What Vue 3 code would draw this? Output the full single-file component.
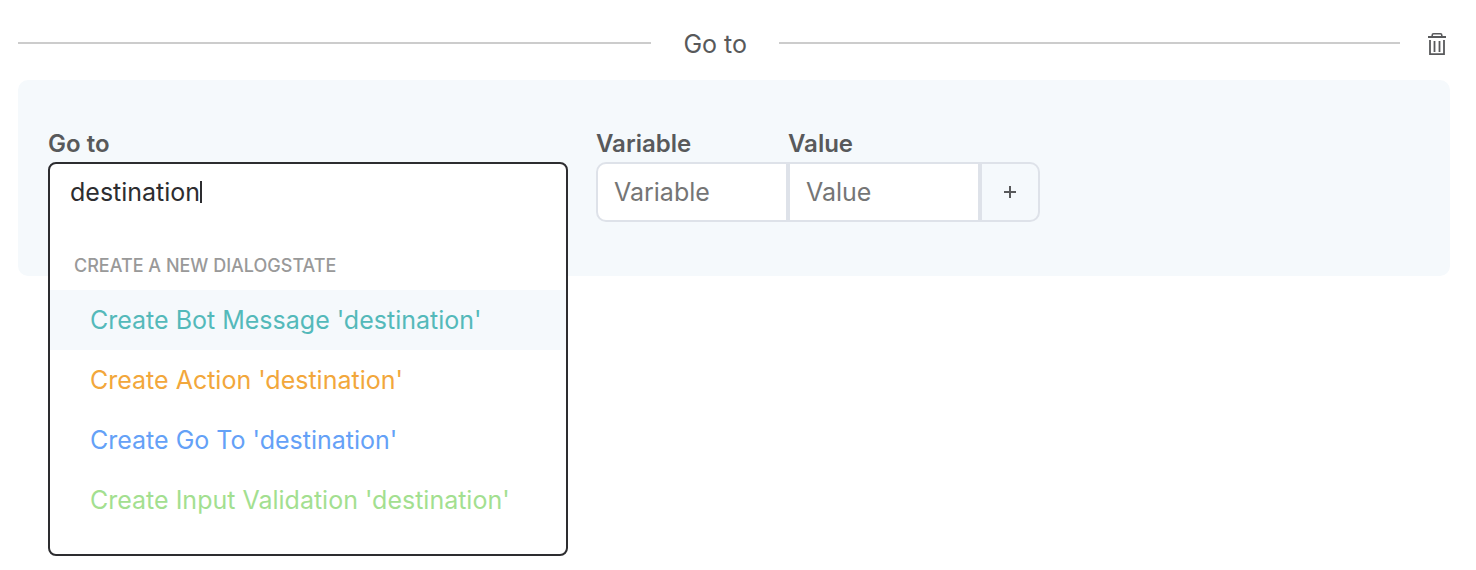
<script setup>
import { ref, computed } from 'vue'

const query = ref('destination')
const variable = ref('')
const value = ref('')
const active = ref(0)

const kinds = [
  { name: 'Bot Message', tone: 'teal' },
  { name: 'Action', tone: 'orange' },
  { name: 'Go To', tone: 'blue' },
  { name: 'Input Validation', tone: 'green' },
]
const options = computed(() =>
  kinds.map((k) => ({ tone: k.tone, label: `Create ${k.name} '${query.value}'` }))
)
</script>

<template>
  <main class="page">
    <header class="divider">
      <span class="rule rule-start"></span>
      <h2 class="title">Go to</h2>
      <span class="rule rule-end"></span>
      <button class="remove" type="button" aria-label="Delete">
        <svg width="20" height="24" viewBox="0 0 20 24" fill="none" stroke="#58595b">
          <path d="M1 5H19" stroke-width="2" />
          <path d="M5.2 5V3.2Q5.2 1.8 6.6 1.8H13.4Q14.8 1.8 14.8 3.2V5" stroke-width="1.6" />
          <path d="M3 8V22.2H17V8" stroke-width="1.8" />
          <path d="M7.5 9V20M12.5 9V20" stroke-width="1.8" />
        </svg>
      </button>
    </header>

    <section class="panel">
      <div class="field target">
        <label class="label" for="goto">Go to</label>
        <div class="anchor">
          <div class="combo">
            <div class="entry">
              <input id="goto" v-model="query" class="query" type="text" autocomplete="off" />
              <span class="caret"></span>
            </div>
            <h3 class="group">CREATE A NEW DIALOGSTATE</h3>
            <ul class="options">
              <li v-for="(o, i) in options" :key="o.tone">
                <button
                  type="button"
                  class="option"
                  :class="[o.tone, { active: i === active }]"
                  @mouseenter="active = i"
                >{{ o.label }}</button>
              </li>
            </ul>
          </div>
        </div>
      </div>

      <div class="field pair">
        <label class="label" for="variable">Variable</label>
        <input id="variable" v-model="variable" class="box first" type="text" placeholder="Variable" />
      </div>
      <div class="field pair">
        <label class="label" for="value">Value</label>
        <input id="value" v-model="value" class="box" type="text" placeholder="Value" />
      </div>
      <button class="add" type="button" aria-label="Add variable">
        <svg width="14" height="14" viewBox="0 0 14 14" fill="none" stroke="#58595b" stroke-width="2">
          <path d="M1 7H13M7 1V13" />
        </svg>
      </button>
    </section>
  </main>
</template>

<style>
body {
  margin: 0;
  background: #fff;
}
</style>

<style scoped>
.page {
  min-height: 100vh;
  padding: 24px 26px 0 18px;
  font-family: Inter, "Liberation Sans", sans-serif;
  font-size: 25px;
  line-height: 36px;
  color: #58595b;
}
.page *,
.page {
  box-sizing: border-box;
}
button,
input {
  font: inherit;
  color: inherit;
  margin: 0;
}
.divider {
  display: flex;
  align-items: center;
  height: 40px;
}
.rule {
  height: 2px;
  margin-bottom: 2px;
  background: #ccc;
}
.rule-start {
  flex: 51 1 0;
}
.rule-end {
  flex: 50 1 0;
}
.title {
  margin: 0;
  padding: 0 32px;
  font-size: 25px;
  font-weight: 400;
}
.remove {
  display: flex;
  margin-left: 27px;
  margin-right: 3px;
  padding: 0;
  border: 0;
  background: none;
}
.panel {
  display: flex;
  align-items: flex-end;
  margin-top: 16px;
  padding: 46px 30px 54px;
  border-radius: 10px;
  background: #f5f9fc;
}
.field {
  min-width: 0;
}
.target {
  flex: 0 1 520px;
  margin-right: 28px;
}
.pair {
  flex: 0 1 192px;
}
.label {
  display: block;
  font-size: 24px;
  font-weight: 600;
}
.anchor {
  position: relative;
  height: 60px;
}
.combo {
  position: absolute;
  top: 0;
  left: 0;
  right: 0;
  padding-bottom: 24px;
  border: 2px solid #2d2d30;
  border-radius: 8px;
  background: #fff;
}
.entry {
  display: flex;
  align-items: center;
  height: 56px;
  padding: 0 20px;
}
.query {
  field-sizing: content;
  padding: 0;
  border: 0;
  outline: 0;
  background: none;
  color: #2d2d30;
  caret-color: transparent;
}
.caret {
  width: 2px;
  height: 22px;
  background: #2d2d30;
}
.group {
  margin: 0;
  padding: 34px 24px 12px;
  font-size: 18px;
  line-height: 24px;
  font-weight: 500;
  color: #999;
}
.options {
  margin: 0;
  padding: 0;
  list-style: none;
}
.option {
  display: block;
  width: 100%;
  height: 60px;
  padding: 0 40px;
  border: 0;
  background: none;
  text-align: left;
  white-space: nowrap;
}
.option.active {
  background: #f5f9fc;
}
.teal {
  color: #54b9ba;
}
.orange {
  color: #f2a73b;
}
.blue {
  color: #64a1f7;
}
.green {
  color: #a3df90;
}
.box {
  display: block;
  width: 100%;
  height: 60px;
  padding: 0 16px;
  border: 2px solid #dee2e9;
  border-radius: 0;
  background: #fff;
}
.box.first {
  border-radius: 10px 0 0 10px;
}
.box::placeholder {
  color: #757575;
  opacity: 1;
}
.add {
  display: flex;
  align-items: center;
  justify-content: center;
  flex: 0 0 60px;
  height: 60px;
  padding: 0;
  border: 2px solid #dee2e9;
  border-radius: 0 10px 10px 0;
  background: none;
}
</style>
